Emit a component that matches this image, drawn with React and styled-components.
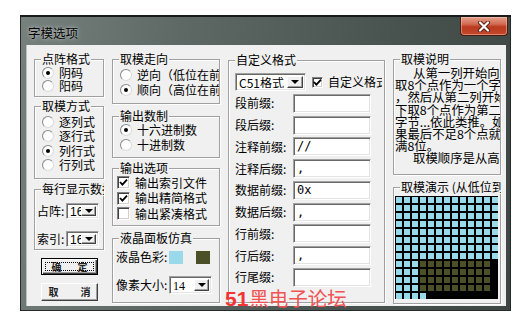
import React from 'react'
import styled, { createGlobalStyle } from 'styled-components'

const GlobalStyle = createGlobalStyle`
  html, body {
    margin: 0;
    padding: 0;
    background: #fff;
    overflow: hidden;
  }
  body {
    font-family: "Noto Sans CJK SC", "Liberation Sans", sans-serif;
    font-size: 12px;
    color: #000;
  }
`

const Page = styled.div`
  position: relative;
  width: 522px;
  height: 332px;
  box-sizing: border-box;
  padding: 15px 0 0 20px;
`

const Window = styled.div`
  width: 491px;
  height: 296px;
  box-sizing: border-box;
  display: flex;
  flex-direction: column;
  padding: 0 5px 5px 7px;
  border-top: 2px solid #171b19;
  background: linear-gradient(100deg, #76817e 0%, #5e6966 30%, #48524f 70%, #3d4643 100%);
  box-shadow: inset 1px 0 0 #262b29, inset -1px 0 0 #262b29, inset 0 -1px 0 #262b29;
`

const TitleBar = styled.div`
  height: 28px;
  flex: none;
  display: flex;
  justify-content: space-between;
  align-items: flex-start;
  margin-right: -2px;
`

const TitleText = styled.span`
  margin: 9px 0 0 1px;
  line-height: 14px;
  font-size: 12.5px;
  color: #000;
  text-shadow: 0 0 5px rgba(255, 255, 255, 0.55), 0 0 2px rgba(255, 255, 255, 0.4);
`

const CloseButton = styled.div`
  width: 48px;
  height: 19px;
  box-sizing: border-box;
  border: 1px solid #4a1d14;
  border-top: none;
  border-radius: 0 0 4px 4px;
  background: linear-gradient(180deg, #e4a08e 0%, #d26a50 40%, #b83a1f 55%, #c5482c 100%);
  box-shadow: inset 0 0 0 1px rgba(255, 210, 190, 0.45);
  display: flex;
  align-items: center;
  justify-content: center;
`

const Client = styled.div`
  position: relative;
  flex: 1;
  background: #f0f0f0;
  display: grid;
  grid-template-columns: 70px 108px 157px 108px;
  column-gap: 8px;
  align-items: start;
  padding: 14px 5px 0 7px;
  box-shadow: -1px 0 0 #b9c2bf;
`

const Column = styled.div`
  display: flex;
  flex-direction: column;
`

const Group = styled.div`
  position: relative;
  box-sizing: border-box;
  height: ${p => p.$h}px;
  margin-top: ${p => p.$mt || 0}px;
  padding: ${p => p.$pad || '0'};
  border: 1px solid #a0a0a0;
  box-shadow: inset 1px 1px 0 #fff, 1px 1px 0 #fff;
  display: flex;
  flex-direction: column;
  gap: ${p => p.$gap || 0}px;
`

const Legend = styled.span`
  position: absolute;
  top: -8px;
  left: 6px;
  max-width: calc(100% - 7px);
  padding: 0 1px;
  background: #f0f0f0;
  line-height: 14px;
  white-space: nowrap;
  overflow: hidden;
`

const Option = styled.div`
  display: flex;
  align-items: center;
  gap: 5px;
  height: ${p => p.$h}px;
  flex: none;
  min-width: 0;
  white-space: nowrap;
  overflow: hidden;
  line-height: 14px;
`

const Radio = styled.span`
  flex: none;
  width: 12px;
  height: 12px;
  box-sizing: border-box;
  border-radius: 50%;
  background: radial-gradient(circle at 60% 60%, #fff 55%, #ececec 100%);
  border: 1px solid;
  border-color: #8c8c8c #dcdcdc #dcdcdc #8c8c8c;
  display: flex;
  align-items: center;
  justify-content: center;

  &::after {
    content: '';
    width: 4px;
    height: 4px;
    border-radius: 50%;
    background: ${p => (p.$on ? '#000' : 'transparent')};
  }
`

const Check = styled.span`
  flex: none;
  width: ${p => p.$size || 13}px;
  height: ${p => p.$size || 13}px;
  box-sizing: border-box;
  background: #fff;
  border: 1px solid;
  border-color: #808080 #fff #fff #808080;
  box-shadow: inset 1px 1px 0 #404040, inset -1px -1px 0 #d4d0c8;
  display: flex;
  align-items: center;
  justify-content: center;
`

const Field = styled.div`
  display: flex;
  align-items: center;
  height: ${p => p.$h}px;
  flex: none;
  min-width: 0;
`

const FieldLabel = styled.span`
  width: ${p => p.$w}px;
  flex: none;
  white-space: nowrap;
  line-height: 14px;
`

const Sunken = styled.div`
  box-sizing: border-box;
  background: #fff;
  border: 1px solid;
  border-color: #a0a0a0 #fff #fff #a0a0a0;
  box-shadow: inset 1px 1px 0 #696969, inset -1px -1px 0 #e3e3e3;
`

const TextBox = styled(Sunken)`
  width: 78px;
  height: 19px;
  padding: 0 3px;
  font-family: "DejaVu Sans Mono", "Liberation Mono", monospace;
  font-size: 12px;
  line-height: 17px;
  white-space: pre;
`

const Combo = styled(Sunken)`
  flex: none;
  display: flex;
  width: ${p => p.$w}px;
  height: ${p => p.$h}px;
  padding: 2px;
`

const ComboText = styled.span`
  flex: 1;
  padding-left: 1px;
  font-family: ${p => p.$font || '"Noto Sans CJK SC", sans-serif'};
  font-size: 12px;
  line-height: ${p => p.$lh || 13}px;
  white-space: nowrap;
  overflow: hidden;
`

const ComboArrow = styled.span`
  flex: none;
  width: ${p => p.$w || 15}px;
  box-sizing: border-box;
  background: #f0f0f0;
  border: 1px solid;
  border-color: #fff #404040 #404040 #fff;
  box-shadow: inset -1px -1px 0 #a0a0a0;
  display: flex;
  align-items: center;
  justify-content: center;

  &::after {
    content: '';
    border-left: 4px solid transparent;
    border-right: 4px solid transparent;
    border-top: 4px solid #000;
  }
`

const CustomCheck = styled(Option)`
  margin-left: 6px;
  flex: 1;
`

const Swatch = styled.span`
  flex: none;
  width: 14px;
  height: 13px;
  margin-right: ${p => p.$mr || 0}px;
  background: ${p => p.$color};
`

const Button = styled.div`
  position: relative;
  box-sizing: border-box;
  width: 57px;
  height: ${p => p.$h}px;
  margin: ${p => p.$mt}px 0 0 7px;
  background: #f0f0f0;
  border: 1px solid;
  border-color: ${p => (p.$default ? '#000' : '#fff #404040 #404040 #fff')};
  box-shadow: ${p =>
    p.$default
      ? 'inset 1px 1px 0 #fff, inset -1px -1px 0 #404040, inset -2px -2px 0 #a0a0a0'
      : 'inset -1px -1px 0 #a0a0a0'};
  display: flex;
  align-items: center;
  justify-content: center;
  gap: ${p => p.$gap}px;
  font-size: 10px;
  font-weight: 700;
  color: #222;
  line-height: 12px;

  &::after {
    content: '';
    display: ${p => (p.$default ? 'block' : 'none')};
    position: absolute;
    inset: 3px;
    border: 1px dotted #000;
  }
`

const Note = styled.div`
  display: flex;
  flex-direction: column;
  padding: 7px 0 0 1px;
  font-size: 12.4px;
  overflow: hidden;
`

const NoteLine = styled.div`
  height: 12.2px;
  line-height: 12.2px;
  white-space: nowrap;
  padding-left: ${p => (p.$indent ? 18 : 0)}px;
`

const Lcd = styled.div`
  align-self: flex-start;
  display: grid;
  grid-template-columns: repeat(13, 6px);
  grid-auto-rows: 6px;
  gap: 2px;
  padding: 1px 0 0 1px;
  background: #000;
  height: 103px;
  box-sizing: border-box;
`

const Pixel = styled.span`
  background: ${p => (p.$kind === 'on' ? '#99d9ea' : p.$kind === 'dim' ? '#4c5028' : 'transparent')};
`

const Watermark = styled.div`
  position: absolute;
  left: 225px;
  top: 287px;
  display: flex;
  align-items: baseline;
  color: #f25252;
  font-size: 19.5px;
  line-height: 22px;
  white-space: nowrap;
`

const WatermarkNum = styled.span`
  font-family: "Liberation Sans", sans-serif;
  font-weight: 700;
  font-size: 21px;
  margin-right: 1px;
  color: #f23434;
`

const CheckMark = () => (
  <svg width="9" height="9" viewBox="0 0 9 9">
    <polyline points="1,4 3.4,6.6 8,1.6" fill="none" stroke="#000" strokeWidth="1.8" />
  </svg>
)

const CloseGlyph = () => (
  <svg width="14" height="11" viewBox="0 0 14 11">
    <path d="M3 1.5 L11 9.5 M11 1.5 L3 9.5" stroke="#5a1e12" strokeWidth="4" strokeLinecap="round" />
    <path d="M3 1.5 L11 9.5 M11 1.5 L3 9.5" stroke="#fff" strokeWidth="2.2" strokeLinecap="round" />
  </svg>
)

const pixelKind = (r, c) => {
  if (r < 8) return 'on'
  if (r < 12) return c < 3 ? 'on' : c < 12 ? 'dim' : 'off'
  return c < 4 ? 'on' : 'off'
}

const affixes = [
  ['段前缀:', ''],
  ['段后缀:', ''],
  ['注释前缀:', '//'],
  ['注释后缀:', ','],
  ['数据前缀:', '0x'],
  ['数据后缀:', ','],
  ['行前缀:', ''],
  ['行后缀:', ','],
  ['行尾缀:', ''],
]

const noteLines = [
  ['从第一列开始向下', true],
  ['取8个点作为一个字节', false],
  ['，然后从第二列开始向', false],
  ['下取8个点作为第二个', false],
  ['字节...依此类推。如', false],
  ['果最后不足8个点就补', false],
  ['满8位。', false],
  ['取模顺序是从高到低', true],
]

export default function App() {
  return (
    <Page>
      <GlobalStyle />
      <Window>
        <TitleBar>
          <TitleText>字模选项</TitleText>
          <CloseButton>
            <CloseGlyph />
          </CloseButton>
        </TitleBar>
        <Client>
          <Column>
            <Group $h={38} $pad="6px 0 0 7px">
              <Legend>点阵格式</Legend>
              <Option $h={13}><Radio $on />阴码</Option>
              <Option $h={13}><Radio />阳码</Option>
            </Group>
            <Group $h={73} $mt={9} $pad="8px 0 0 7px">
              <Legend>取模方式</Legend>
              <Option $h={14.3}><Radio />逐列式</Option>
              <Option $h={14.3}><Radio />逐行式</Option>
              <Option $h={14.3}><Radio $on />列行式</Option>
              <Option $h={14.3}><Radio />行列式</Option>
            </Group>
            <Group $h={61} $mt={10} $pad="13px 0 0 2px" $gap={12}>
              <Legend>每行显示数据</Legend>
              <Field $h={16}>
                <FieldLabel $w={29}>占阵:</FieldLabel>
                <Combo $w={33} $h={16}>
                  <ComboText $font='"Liberation Sans", sans-serif' $lh={12}>16</ComboText>
                  <ComboArrow />
                </Combo>
              </Field>
              <Field $h={16}>
                <FieldLabel $w={29}>索引:</FieldLabel>
                <Combo $w={33} $h={16}>
                  <ComboText $font='"Liberation Sans", sans-serif' $lh={12}>16</ComboText>
                  <ComboArrow />
                </Combo>
              </Field>
            </Group>
            <Button $default $h={17} $mt={8} $gap={16}>
              <span>确</span>
              <span>定</span>
            </Button>
            <Button $h={18} $mt={8} $gap={22}>
              <span>取</span>
              <span>消</span>
            </Button>
          </Column>

          <Column>
            <Group $h={45} $pad="7px 0 0 7px">
              <Legend>取模走向</Legend>
              <Option $h={15}><Radio />逆向（低位在前）</Option>
              <Option $h={15}><Radio $on />顺向（高位在前）</Option>
            </Group>
            <Group $h={42} $mt={12} $pad="5px 0 0 7px">
              <Legend>输出数制</Legend>
              <Option $h={15.5}><Radio $on />十六进制数</Option>
              <Option $h={15.5}><Radio />十进制数</Option>
            </Group>
            <Group $h={58} $mt={10} $pad="6px 0 0 4px">
              <Legend>输出选项</Legend>
              <Option $h={15.5}><Check><CheckMark /></Check>输出索引文件</Option>
              <Option $h={15.5}><Check><CheckMark /></Check>输出精简格式</Option>
              <Option $h={15.5}><Check />输出紧凑格式</Option>
            </Group>
            <Group $h={65} $mt={12} $pad="11px 0 0 3px" $gap={12}>
              <Legend>液晶面板仿真</Legend>
              <Field $h={14}>
                <FieldLabel $w={53}>液晶色彩:</FieldLabel>
                <Swatch $color="#99d9ea" $mr={13} />
                <Swatch $color="#4c5028" />
              </Field>
              <Field $h={18}>
                <FieldLabel $w={53}>像素大小:</FieldLabel>
                <Combo $w={43} $h={18}>
                  <ComboText $font='"Liberation Serif", serif' $lh={14}>14</ComboText>
                  <ComboArrow />
                </Combo>
              </Field>
            </Group>
          </Column>

          <Column>
            <Group $h={243} $mt={1} $pad="12px 2px 0 6px" $gap={2.75}>
              <Legend>自定义格式</Legend>
              <Field $h={18}>
                <Combo $w={71} $h={18}>
                  <ComboText $lh={14}>C51格式</ComboText>
                  <ComboArrow $w={16} />
                </Combo>
                <CustomCheck $h={18}>
                  <Check $size={11}><CheckMark /></Check>自定义格式
                </CustomCheck>
              </Field>
              {affixes.map(([label, value]) => (
                <Field key={label} $h={19}>
                  <FieldLabel $w={58}>{label}</FieldLabel>
                  <TextBox>{value}</TextBox>
                </Field>
              ))}
            </Group>
          </Column>

          <Column>
            <Group $h={116}>
              <Legend>取模说明</Legend>
              <Note>
                {noteLines.map(([text, indent]) => (
                  <NoteLine key={text} $indent={indent}>{text}</NoteLine>
                ))}
              </Note>
            </Group>
            <Group $h={117} $mt={12} $pad="8px 0 0 1px">
              <Legend>取模演示 (从低位到高位)</Legend>
              <Lcd>
                {Array.from({ length: 13 * 13 }, (_, i) => (
                  <Pixel key={i} $kind={pixelKind(Math.floor(i / 13), i % 13)} />
                ))}
              </Lcd>
            </Group>
          </Column>
        </Client>
      </Window>
      <Watermark>
        <WatermarkNum>51</WatermarkNum>
        黑电子论坛
      </Watermark>
    </Page>
  )
}
